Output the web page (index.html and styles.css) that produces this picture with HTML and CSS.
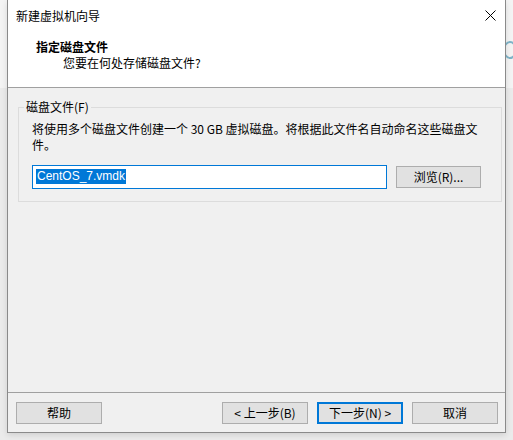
FILE: index.html
```html
<!DOCTYPE html>
<html lang="zh-CN">
<head>
<meta charset="utf-8">
<title>新建虚拟机向导</title>
<link rel="stylesheet" href="styles.css">
</head>
<body>
<div class="backdrop-arc"></div>
<div class="window">
  <div class="titlebar">
    <span class="title">新建虚拟机向导</span>
    <svg class="close" width="11" height="11" viewBox="0 0 11 11"><path d="M0.5 0.5 L10.5 10.5 M10.5 0.5 L0.5 10.5" stroke="#000" stroke-width="1" fill="none"/></svg>
  </div>
  <div class="header">
    <div class="heading">指定磁盘文件</div>
    <div class="subheading">您要在何处存储磁盘文件?</div>
  </div>
  <div class="content">
    <fieldset class="group">
      <legend>磁盘文件(F)</legend>
      <p class="desc">将使用多个磁盘文件创建一个 30 GB 虚拟磁盘。将根据此文件名自动命名这些磁盘文件。</p>
      <div class="file-row">
        <div class="input"><span class="sel">CentOS_7.vmdk</span></div>
        <button class="btn browse">浏览(R)...</button>
      </div>
    </fieldset>
  </div>
  <div class="footer">
    <button class="btn">帮助</button>
    <div class="spacer"></div>
    <button class="btn">&lt; 上一步(B)</button>
    <button class="btn default">下一步(N) &gt;</button>
    <button class="btn">取消</button>
  </div>
</div>
</body>
</html>
```
FILE: styles.css
```css
html, body {
  margin: 0;
  padding: 0;
}
body {
  width: 513px;
  height: 440px;
  background: linear-gradient(to bottom, #f4f4f4 0, #f4f4f4 88px, #ebebeb 88px, #ebebeb 100%);
  font-family: "Noto Sans CJK SC", "Noto Sans", sans-serif;
  font-size: 12px;
  color: #000;
  overflow: hidden;
  position: relative;
}
.backdrop-arc {
  position: absolute;
  left: 503px;
  top: 41px;
  width: 10px;
  height: 14px;
  border: 2px solid #7fb4c8;
  border-radius: 50%;
}
.window {
  position: relative;
  margin-left: 7px;
  width: 499px;
  height: 433px;
  box-sizing: border-box;
  border: 1px solid #8a8a8a;
  border-top: none;
  background: #f0f0f0;
  display: flex;
  flex-direction: column;
  box-shadow: 0 2px 6px rgba(0,0,0,0.12);
}
.titlebar {
  height: 30px;
  background: #fff;
  display: flex;
  align-items: center;
  padding: 0 9px 0 8px;
  line-height: 16px;
}
.title {
  flex: 1;
  margin-top: 2px;
}
.close {
  margin-top: 1px;
}
.header {
  height: 57px;
  background: #fff;
  border-bottom: 1px solid #a0a0a0;
}
.heading {
  font-weight: bold;
  line-height: 16px;
  margin: 9px 0 0 28px;
}
.subheading {
  line-height: 16px;
  margin: 0 0 0 55px;
}
.content {
  flex: 1;
  padding: 11px 9px 0 10px;
}
.group {
  margin: 0;
  border: 1px solid #dcdcdc;
  padding: 0 13px 12px 13px;
}
.group legend {
  padding: 0 2px;
  margin-left: -8px;
  line-height: 16px;
}
.desc {
  margin: 6px 0 0 0;
  line-height: 16px;
  width: 456px;
}
.file-row {
  display: flex;
  align-items: center;
  gap: 9px;
  margin-top: 12px;
}
.input {
  width: 355px;
  height: 24px;
  box-sizing: border-box;
  border: 1px solid #0078d7;
  background: #fff;
  padding: 3px 0 0 3px;
  font-family: "Liberation Sans", "Noto Sans", sans-serif;
  font-size: 12px;
  line-height: 15px;
}
.sel {
  background: #0078d7;
  color: #fff;
  display: inline-block;
  padding: 0 1px;
}
.btn {
  font-family: "Noto Sans CJK SC", "Noto Sans", sans-serif;
  font-size: 12px;
  line-height: 16px;
  color: #000;
  background: #e1e1e1;
  border: 1px solid #adadad;
  width: 86px;
  height: 22px;
  padding: 0;
  margin: 0;
  box-sizing: border-box;
}
.browse {
  width: 85px;
}
.footer {
  height: 40px;
  border-top: 1px solid #a0a0a0;
  display: flex;
  align-items: flex-start;
  gap: 9px;
  padding: 9px 7px 0 8px;
  box-sizing: border-box;
}
.spacer {
  flex: 1;
}
.btn.default {
  border: 2px solid #0078d7;
}
```
